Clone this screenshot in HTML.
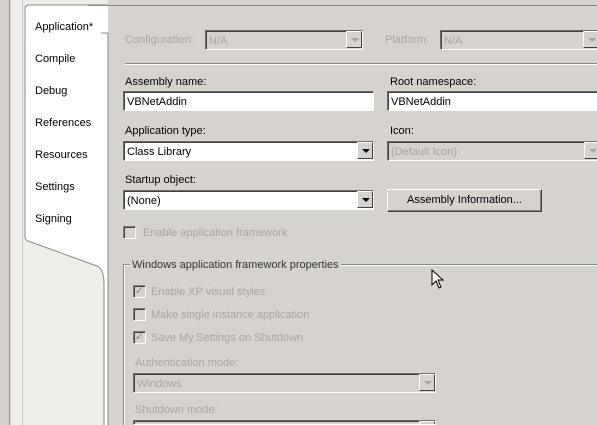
<!DOCTYPE html>
<html style="width:597px;height:425px;overflow:hidden"><head><style>
*{margin:0;padding:0;box-sizing:border-box}
body{width:597px;height:425px;overflow:hidden;background:#d6d3ce;font-family:Tahoma,"Liberation Sans",sans-serif;font-size:11px;color:#000;position:relative}
.a{position:absolute;white-space:nowrap}
.dis{color:#a7a59f}
.in{position:absolute;background:#fff;border-top:1px solid #6f6d68;border-left:1px solid #6f6d68;border-bottom:1px solid #fff;border-right:1px solid #fff;box-shadow:inset 1px 1px 0 #404040;padding:3px 3px 0;line-height:14px;height:20px}
.in.d{background:#d6d3ce;color:#a7a59f}
.btn{position:absolute;right:0;top:0;width:16px;height:17px;background:#d6d3ce;border:1px solid;border-color:#fff #404040 #404040 #fff}
.btn:after{content:"";position:absolute;left:4px;top:6px;border-left:4px solid transparent;border-right:4px solid transparent;border-top:4px solid #000}
.d .btn:after{border-top-color:#a7a59f}
.cb{position:absolute;width:13px;height:13px;border:1px solid;border-color:#808080 #fff #fff #808080;box-shadow:inset 1px 1px 0 #404040;background:#d6d3ce;font-size:11px;line-height:11px;color:#888;text-align:center}
</style></head><body>
<div class="a" style="left:0;top:0;width:10px;height:425px;background:#d4d0c8;border-right:1px solid #9a9890"></div>
<div class="a" style="left:11px;top:0;width:12px;height:425px;background:#efeeea;border-right:1px solid #c8c6c0"></div>
<div class="a" style="left:23px;top:0;width:85px;height:425px;background:#eeede9"></div>
<svg class="a" style="left:20px;top:0" width="92" height="425">
<path d="M4 8 Q4 5 10 5 L88 5 L88 33 L88 425 L84 425 L84 283 Q84 275 77 266 L6 241 Q5 240 5 236 Z" fill="#fff"/>
<path d="M5 42 L5 8 Q5 5 10 5 L88 5" fill="none" stroke="#8a8882"/>
<path d="M5 42 L5 236 Q5 240 8 241 L77 266 Q84 270 84 283 L84 425" fill="none" stroke="#8a8882"/>
<path d="M81 33 L88 33 L88 425" fill="none" stroke="#8a8882"/>
</svg>
<div class="a" style="left:88px;top:5px;width:509px;height:1px;background:#8a8882"></div>
<div class="a" style="left:35px;top:21px">Application*</div>
<div class="a" style="left:35px;top:53px">Compile</div>
<div class="a" style="left:35px;top:85px">Debug</div>
<div class="a" style="left:35px;top:117px">References</div>
<div class="a" style="left:35px;top:149px">Resources</div>
<div class="a" style="left:35px;top:181px">Settings</div>
<div class="a" style="left:35px;top:213px">Signing</div>

<div class="a dis" style="left:125px;top:34px">Configuration:</div>
<div class="in d" style="left:205px;top:30px;width:158px">N/A<div class="btn"></div></div>
<div class="a dis" style="left:385px;top:34px">Platform:</div>
<div class="in d" style="left:440px;top:30px;width:160px">N/A<div class="btn"></div></div>
<div class="a" style="left:125px;top:63px;width:472px;height:2px;border-top:1px solid #8a8882;border-bottom:1px solid #fff"></div>

<div class="a" style="left:125px;top:76px">Assembly name:</div>
<div class="in" style="left:123px;top:91px;width:251px">VBNetAddin</div>
<div class="a" style="left:390px;top:76px">Root namespace:</div>
<div class="in" style="left:387px;top:91px;width:212px">VBNetAddin</div>

<div class="a" style="left:125px;top:125px">Application type:</div>
<div class="in" style="left:123px;top:141px;width:251px">Class Library<div class="btn"></div></div>
<div class="a" style="left:390px;top:125px">Icon:</div>
<div class="in d" style="left:387px;top:141px;width:214px">(Default Icon)<div class="btn"></div></div>

<div class="a" style="left:125px;top:174px">Startup object:</div>
<div class="in" style="left:123px;top:190px;width:251px">(None)<div class="btn"></div></div>
<div class="a" style="left:387px;top:189px;width:155px;height:23px;border:1px solid;border-color:#fff #404040 #404040 #fff;box-shadow:inset -1px -1px 0 #808080;text-align:center;line-height:21px">Assembly Information...</div>

<div class="cb" style="left:123px;top:226px"></div>
<div class="a dis" style="left:143px;top:227px">Enable application framework</div>

<div class="a" style="left:123px;top:264px;width:480px;height:170px;border:1px solid #8a8882;box-shadow:inset 1px 1px 0 #fff"></div>
<div class="a" style="left:130px;top:259px;background:#d6d3ce;padding:0 2px;color:#333">Windows application framework properties</div>

<div class="cb" style="left:133px;top:285px">✓</div>
<div class="a dis" style="left:151px;top:286px">Enable XP visual styles</div>
<div class="cb" style="left:133px;top:308px"></div>
<div class="a dis" style="left:151px;top:309px">Make single instance application</div>
<div class="cb" style="left:133px;top:331px">✓</div>
<div class="a dis" style="left:151px;top:332px">Save My.Settings on Shutdown</div>

<div class="a dis" style="left:135px;top:357px">Authentication mode:</div>
<div class="in d" style="left:133px;top:373px;width:303px">Windows<div class="btn"></div></div>
<div class="a dis" style="left:135px;top:404px">Shutdown mode:</div>
<div class="in d" style="left:133px;top:420px;width:303px;height:5px;overflow:hidden"><div class="btn"></div></div>

<svg class="a" style="left:431px;top:269px" width="14" height="22"><path d="M1 1 L1 16 L5 12 L8 19 L10 18 L7 11 L12 11 Z" fill="#fff" stroke="#000"/></svg>
</body></html>
